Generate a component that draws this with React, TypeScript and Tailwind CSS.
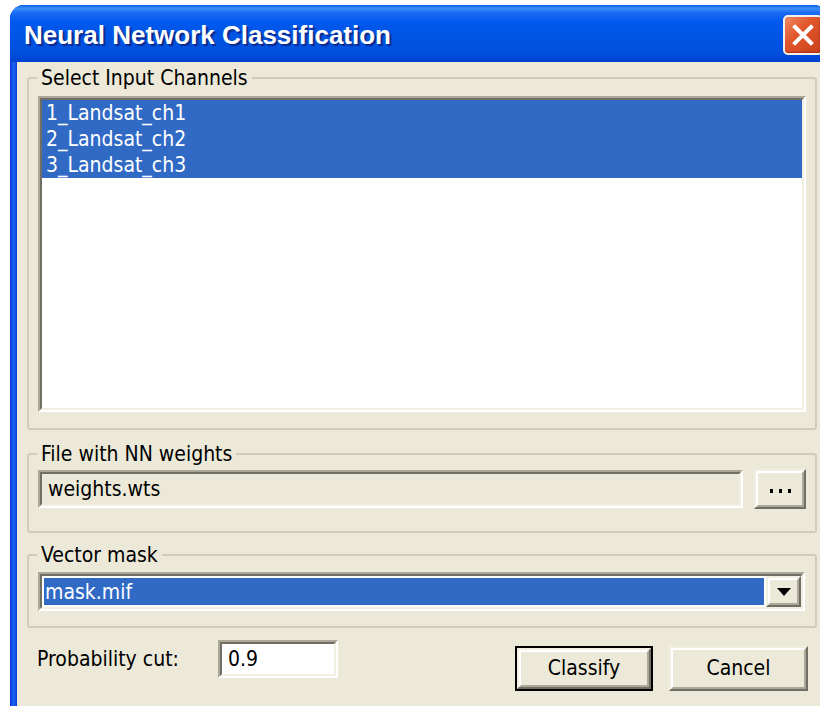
import { ReactNode } from "react";

const ui =
  "font-['DejaVu_Sans_Condensed','DejaVu_Sans',sans-serif] font-stretch-condensed text-[21px] leading-[26px] text-black";

type BoxProps = { className?: string; inner?: string; children?: ReactNode };

// classic 3D sunken edge: two 2px rings, dark on top/left
function Sunken({ className = "", inner = "", children }: BoxProps) {
  return (
    <div className={`border-2 border-t-[#aca899] border-l-[#aca899] border-b-white border-r-white ${className}`}>
      <div className={`h-full border-2 border-t-[#716f64] border-l-[#716f64] border-b-[#f1efe2] border-r-[#f1efe2] ${inner}`}>
        {children}
      </div>
    </div>
  );
}

function Raised({ className = "", inner = "", children }: BoxProps) {
  return (
    <div className={`border-2 border-t-[#f1efe2] border-l-[#f1efe2] border-b-[#716f64] border-r-[#716f64] bg-[#ece9d8] ${className}`}>
      <div className={`h-full border-2 border-t-white border-l-white border-b-[#aca899] border-r-[#aca899] flex items-center justify-center ${inner}`}>
        {children}
      </div>
    </div>
  );
}

function Group({ title, className = "", children }: { title: string; className?: string; children?: ReactNode }) {
  return (
    <fieldset className={`w-[790px] min-w-0 border-2 border-[#d0ccbc] rounded-[3px] px-[9px] ${className}`}>
      <legend className="ml-[-1px] px-[4px]">{title}</legend>
      {children}
    </fieldset>
  );
}

const channels = ["1_Landsat_ch1", "2_Landsat_ch2", "3_Landsat_ch3"];

export default function App() {
  return (
    <div className={`w-[820px] h-[706px] overflow-hidden bg-white ${ui}`}>
      <div className="ml-[10px] mt-[5px] w-[818px] h-[701px] rounded-t-[14px] overflow-hidden flex flex-col bg-[#0842d8]">
        {/* title bar */}
        <div className="h-[57px] shrink-0 flex items-start justify-between pr-[5px] bg-[linear-gradient(to_bottom,#0a5ae6_0%,#3d8ff8_6%,#1a6af4_14%,#0058ee_30%,#0054e3_60%,#0050dc_85%,#0040d0_100%)]">
          <div className="pl-[14px] pt-[15px] font-['Liberation_Sans',Arial,sans-serif] font-bold text-[26px] leading-[30px] text-white [text-shadow:2px_2px_1px_#0c2a8c]">
            Neural Network Classification
          </div>
          <button className="mt-[10px] w-[40px] h-[40px] rounded-[5px] border-2 border-[#f4f0ee] bg-[linear-gradient(135deg,#ee8a66_0%,#e2562c_40%,#c8401a_100%)] flex items-center justify-center shadow-[inset_-1px_-1px_2px_#a83010]">
            <svg width="24" height="24" viewBox="0 0 24 24">
              <path d="M4 4 L20 20 M20 4 L4 20" stroke="white" strokeWidth="4" strokeLinecap="square" />
            </svg>
          </button>
        </div>

        {/* body */}
        <div className="flex-1 flex">
          <div className="w-[7px] bg-[linear-gradient(to_right,#0831d9,#1a66f0_50%,#0a3fe0)]" />
          <div className="flex-1 bg-[#ece9d8] pl-[10px] pt-[3px]">
            <Group title="Select Input Channels" className="pb-[16px]">
              <Sunken className="mt-[5px] h-[316px]" inner="bg-white">
                {channels.map((c) => (
                  <div key={c} className="h-[26px] bg-[#316ac5] text-white pl-[4px]">
                    {c}
                  </div>
                ))}
              </Sunken>
            </Group>

            <Group title="File with NN weights" className="mt-[11px] pb-[22px]">
              <div className="mt-[3px] flex items-start gap-[11px]">
                <Sunken className="w-[707px] h-[38px]" inner="bg-[#ece9d8] flex items-center pl-[6px]">
                  weights.wts
                </Sunken>
                <Raised className="w-[52px] h-[40px] -mt-[1px]" inner="gap-[6px] pt-[4px]">
                  <span className="w-[3px] h-[4px] bg-black" />
                  <span className="w-[3px] h-[4px] bg-black" />
                  <span className="w-[3px] h-[4px] bg-black" />
                </Raised>
              </div>
            </Group>

            <Group title="Vector mask" className="mt-[9px] pb-[15px]">
              <Sunken className="mt-[4px] w-[767px] h-[39px]" inner="bg-white flex">
                <div className="flex-1 m-[2px] bg-[#316ac5] text-white pl-[1px] flex items-center">mask.mif</div>
                <Raised className="w-[35px]">
                  <svg width="14" height="8" viewBox="0 0 14 8">
                    <path d="M0 0 H14 L7 8 Z" fill="black" />
                  </svg>
                </Raised>
              </Sunken>
            </Group>

            <div className="mt-[12px] w-[790px] flex items-start pr-[9px]">
              <div className="w-[191px] h-[38px] pl-[10px] flex items-center">Probability cut:</div>
              <Sunken className="w-[120px] h-[38px]" inner="bg-white flex items-center pl-[6px]">
                0.9
              </Sunken>
              <div className="ml-auto mt-[6px] flex gap-[16px]">
                <div className="w-[138px] h-[45px] border-2 border-black">
                  <Raised className="h-full" inner="pb-[1px]">Classify</Raised>
                </div>
                <Raised className="w-[139px] h-[45px]" inner="pb-[1px]">Cancel</Raised>
              </div>
            </div>
          </div>
        </div>
      </div>
    </div>
  );
}
